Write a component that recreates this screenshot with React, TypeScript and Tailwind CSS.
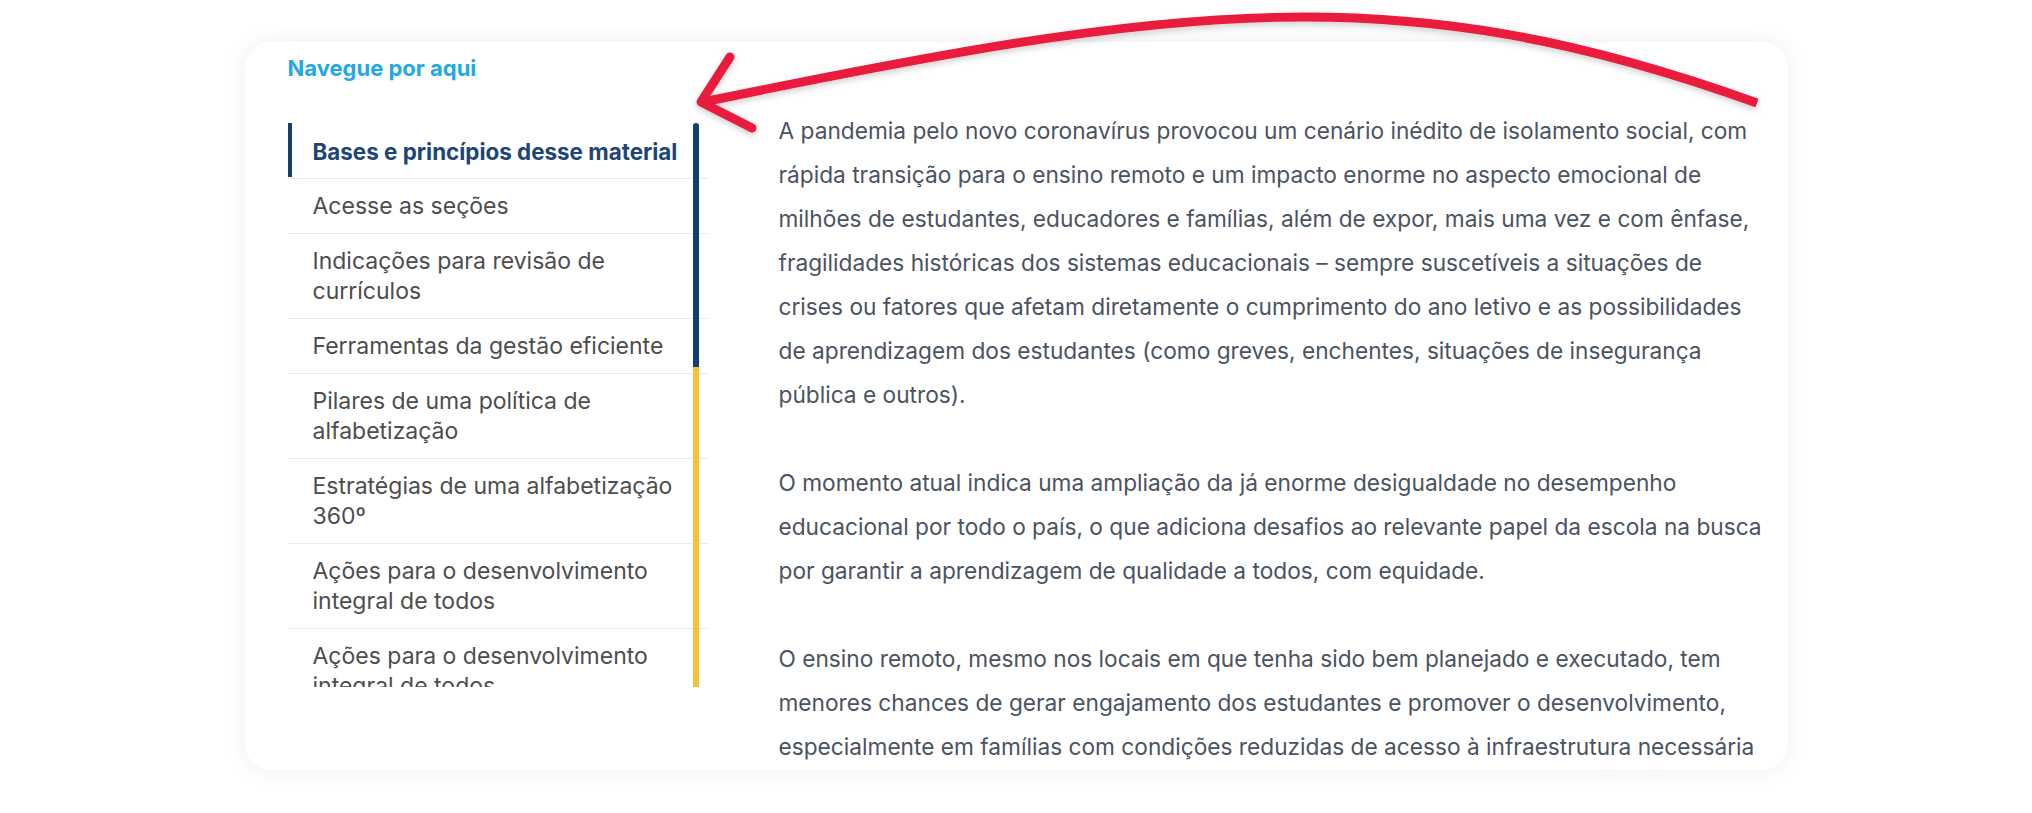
import React from "react";

const navItems: { lines: string[]; active?: boolean }[] = [
  { lines: ["Bases e princípios desse material"], active: true },
  { lines: ["Acesse as seções"] },
  { lines: ["Indicações para revisão de", "currículos"] },
  { lines: ["Ferramentas da gestão eficiente"] },
  { lines: ["Pilares de uma política de", "alfabetização"] },
  { lines: ["Estratégias de uma alfabetização", "360º"] },
  { lines: ["Ações para o desenvolvimento", "integral de todos"] },
  { lines: ["Ações para o desenvolvimento", "integral de todos"] },
];

const paragraphs: string[][] = [
  [
    "A pandemia pelo novo coronavírus provocou um cenário inédito de isolamento social, com",
    "rápida transição para o ensino remoto e um impacto enorme no aspecto emocional de",
    "milhões de estudantes, educadores e famílias, além de expor, mais uma vez e com ênfase,",
    "fragilidades históricas dos sistemas educacionais – sempre suscetíveis a situações de",
    "crises ou fatores que afetam diretamente o cumprimento do ano letivo e as possibilidades",
    "de aprendizagem dos estudantes (como greves, enchentes, situações de insegurança",
    "pública e outros).",
  ],
  [
    "O momento atual indica uma ampliação da já enorme desigualdade no desempenho",
    "educacional por todo o país, o que adiciona desafios ao relevante papel da escola na busca",
    "por garantir a aprendizagem de qualidade a todos, com equidade.",
  ],
  [
    "O ensino remoto, mesmo nos locais em que tenha sido bem planejado e executado, tem",
    "menores chances de gerar engajamento dos estudantes e promover o desenvolvimento,",
    "especialmente em famílias com condições reduzidas de acesso à infraestrutura necessária",
  ],
];

export default function App() {
  return (
    <div
      className="relative w-[2032px] h-[813px] bg-white overflow-hidden"
      style={{ fontFamily: "Inter, Roboto, 'Noto Sans', sans-serif" }}
    >
      <div className="mx-auto mt-[42px] w-[1543px] h-[728px] rounded-[26px] bg-white shadow-[0_0_22px_rgba(0,0,0,0.07)] overflow-hidden flex pl-[43px] pt-[12px]">
        {/* Left column */}
        <div className="w-[420px] shrink-0 flex flex-col">
          <h2 className="text-[22px] leading-[28px] font-bold text-[#22a9e1]">Navegue por aqui</h2>
          <nav className="relative mt-[41px] h-[564px] overflow-hidden">
            <ul>
              {navItems.map((item, i) => (
                <li
                  key={i}
                  className={
                    item.active
                      ? "relative border-b border-[#ebebeb] pt-[13px] pb-[11px] pl-[25px] pr-[10px] text-[22.4px] leading-[31px] font-bold text-[#1d4576] whitespace-nowrap"
                      : "relative border-b border-[#ebebeb] py-[12px] pl-[25px] pr-[10px] text-[23px] leading-[30px] text-[#4d4d4d] whitespace-nowrap"
                  }
                >
                  {item.active && (
                    <span className="absolute left-0 top-0 bottom-[1px] w-[4px] bg-[#173e6f]" />
                  )}
                  {item.lines.map((l, j) => (
                    <span key={j} className="block">
                      {l}
                    </span>
                  ))}
                </li>
              ))}
            </ul>
            {/* scroll indicator */}
            <div className="absolute top-0 bottom-0 left-[405px] w-[6px] flex flex-col">
              <div className="h-[244px] bg-[#123f74] rounded-t-[3px]" />
              <div className="flex-1 bg-[#f8c332]" />
            </div>
          </nav>
        </div>

        {/* Right column */}
        <div className="ml-[71px] mt-[55px] w-[1000px] text-[22.7px] leading-[44px] text-[#4a5361]">
          {paragraphs.map((p, i) => (
            <p key={i} className="mb-[44px] whitespace-nowrap">
              {p.map((l, j) => (
                <span key={j} className="block">
                  {l}
                </span>
              ))}
            </p>
          ))}
        </div>
      </div>

      {/* Red arrow annotation */}
      <svg
        className="absolute left-0 top-0 pointer-events-none"
        width="2032"
        height="813"
        viewBox="0 0 2032 813"
      >
        <defs>
          <filter id="ash" x="-10%" y="-50%" width="120%" height="200%">
            <feDropShadow dx="0" dy="3" stdDeviation="3" floodColor="#000" floodOpacity="0.18" />
          </filter>
        </defs>
        <g filter="url(#ash)" fill="none" stroke="#e91a3e" strokeWidth="9">
          <path d="M 1757 103 C 1400 -26, 1180 4, 703 102" strokeLinecap="butt" />
          <path d="M 730 57 L 701 102 L 752 128" strokeLinecap="round" strokeLinejoin="round" />
        </g>
      </svg>
    </div>
  );
}
